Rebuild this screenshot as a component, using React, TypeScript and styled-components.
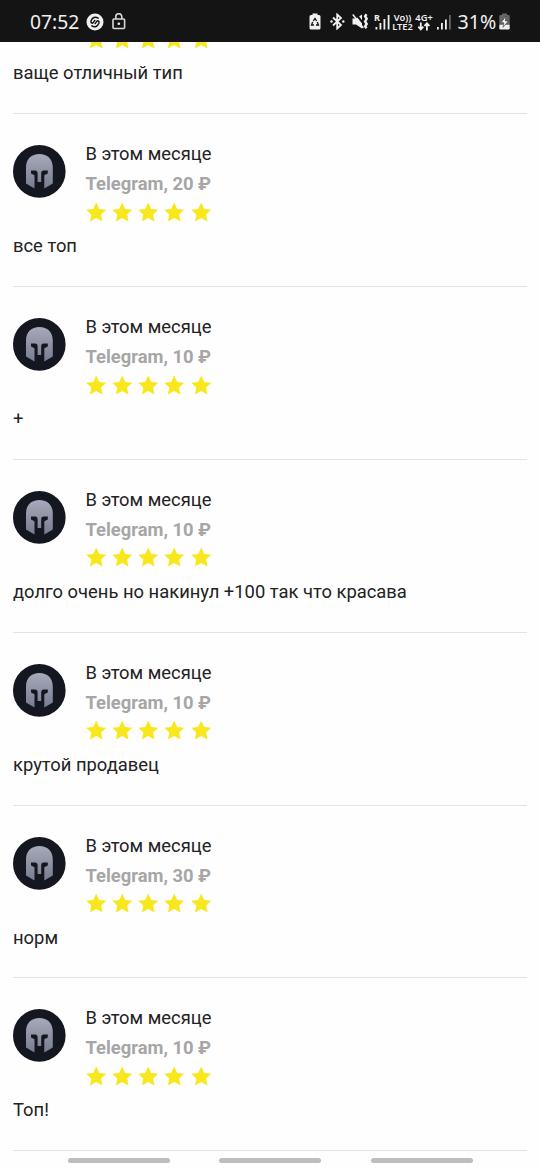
import React from 'react';
import styled, { createGlobalStyle } from 'styled-components';

const GlobalStyle = createGlobalStyle`
  * { box-sizing: border-box; }
  body { margin: 0; background: #fefefe; }
`;

const Screen = styled.div`
  width: 540px;
  height: 1170px;
  overflow: hidden;
  display: flex;
  flex-direction: column;
  background: #fefefe;
  font-family: Roboto, sans-serif;
  color: #222;
`;

const StatusBar = styled.header`
  flex: none;
  height: 41.5px;
  display: flex;
  justify-content: space-between;
  align-items: center;
  padding: 2px 30px 0 30px;
  background: #141414;
  color: #f0f0f0;
  font-family: 'Noto Sans', sans-serif;
`;

const StatusGroup = styled.div`
  display: flex;
  align-items: center;
`;

const Clock = styled.span`
  width: 49px;
  margin-right: 7px;
  font-size: 19.3px;
  line-height: 24px;
  white-space: nowrap;
`;

const Glyph = styled.svg<{ $gap?: number }>`
  display: block;
  flex: none;
  margin-right: ${p => p.$gap ?? 0}px;
`;

const Stack = styled.div<{ $width: number; $gap: number }>`
  width: ${p => p.$width}px;
  margin-right: ${p => p.$gap}px;
  display: flex;
  flex-direction: column;
  align-items: center;
  font-size: 9.3px;
  font-weight: 600;
  line-height: 9px;
  white-space: nowrap;
`;

const Percent = styled.span`
  width: 41.5px;
  font-size: 19.6px;
  line-height: 24px;
  white-space: nowrap;
`;

const Viewport = styled.main`
  flex: 1;
  min-height: 0;
  overflow: hidden;
  padding: 0 13px;
`;

const ReviewList = styled.ul`
  list-style: none;
  margin: -100.41px 0 0;
  padding: 0;
`;

const Review = styled.li`
  height: 172.9px;
  padding-top: 25px;
  border-bottom: 1.3px solid #e3e3e3;
`;

const ReviewHead = styled.div`
  display: flex;
  gap: 19.5px;
`;

const Avatar = styled.svg`
  flex: none;
  width: 53px;
  height: 53px;
  margin-top: 6px;
`;

const Title = styled.div`
  font-size: 18.37px;
  line-height: 30px;
  white-space: nowrap;
`;

const Price = styled(Title)`
  font-weight: 700;
  color: #a6a6a6;
`;

const Stars = styled.div`
  display: flex;
  gap: 5.3px;
  height: 32px;
  padding-top: 2.7px;
`;

const Comment = styled.p`
  margin: 0;
  font-size: 18.39px;
  line-height: 30px;
  white-space: nowrap;
`;

const NavBar = styled.nav`
  flex: none;
  height: 18px;
  display: flex;
  justify-content: center;
  gap: 49.5px;
  padding-top: 6px;
`;

const NavPill = styled.span`
  width: 102px;
  height: 5px;
  border-radius: 3px;
  background: #bdbdbd;
`;

const Star = () => (
  <Glyph width="21" height="21" viewBox="0 0 21 21">
    <path d="M10.200.6 13.200 7l7 .8-5.100 4.800 1.400 7-6.300-3.500-6.300 3.500 1.400-7L.2 7.800l7-.8z" fill="#f8e71c" />
  </Glyph>
);

const Helmet = () => (
  <Avatar viewBox="0 0 53 53">
    <defs>
      <linearGradient id="steel" x1="0" y1="0" x2="0" y2="1">
        <stop offset="0" stopColor="#a7aaba" />
        <stop offset="1" stopColor="#777c8f" />
      </linearGradient>
    </defs>
    <circle cx="26.3" cy="26.4" r="26.3" fill="#14171f" />
    <path
      d="M13 22.500C13 14 18.500 9 26.400 9S39.800 14 39.800 22.500V38.500L31.300 43.500V30.200L34.800 28.600V25.600H30.300Q28.200 25.800 28.200 28V37H24.600V28Q24.600 25.800 22.500 25.600H18V28.600L21.500 30.200V43.500L13 38.500Z"
      fill="url(#steel)"
    />
  </Avatar>
);

const Signal = ({ gap }: { gap: number }) => (
  <Glyph width="14" height="16" viewBox="0 0 14 16" $gap={gap} fill="#f0f0f0">
    <rect x="0" y="13" width="1.8" height="2.500" />
    <rect x="4" y="9" width="1.8" height="6.500" />
    <rect x="8" y="5.500" width="1.8" height="10" />
    <rect x="12" y="1" width="1.8" height="14.500" fill="#666" />
  </Glyph>
);

const reviews = [
  { price: 10, text: 'ваще отличный тип' },
  { price: 20, text: 'все топ' },
  { price: 10, text: '+' },
  { price: 10, text: 'долго очень но накинул +100 так что красава' },
  { price: 10, text: 'крутой продавец' },
  { price: 30, text: 'норм' },
  { price: 10, text: 'Топ!' },
];

export default function App() {
  return (
    <Screen>
      <GlobalStyle />
      <StatusBar>
        <StatusGroup>
          <Clock>07:52</Clock>
          <Glyph width="18" height="18" viewBox="0 0 18 18" $gap={8} fill="none">
            <circle cx="9" cy="9" r="8.500" fill="#f0f0f0" />
            <g stroke="#141414" strokeWidth="1.500" strokeLinecap="round" transform="rotate(-25 9 9)">
              <path d="M13.500 6.800C11.500 3.500 8.500 4 6 6.200c-1.500 1.500-.5 3.300 1.200 2.600l2.300-1.300" />
              <path d="M4.500 11.200C6.500 14.500 9.500 14 12 11.800c1.500-1.500.5-3.300-1.200-2.600l-2.300 1.300" />
            </g>
          </Glyph>
          <Glyph width="14" height="18" viewBox="0 0 14 18" fill="none" stroke="#d8d8d8" strokeWidth="1.600">
            <rect x="1" y="6" width="11.600" height="9.500" rx="1" />
            <path d="M3.800 6V3.700a3 3 0 0 1 6 0V6" />
            <circle cx="6.800" cy="10.700" r="1.300" fill="#f0f0f0" stroke="none" />
          </Glyph>
        </StatusGroup>
        <StatusGroup>
          <Glyph width="12" height="17" viewBox="0 0 12 17" $gap={9}>
            <path d="M3.500 2V.5h5V2H10q1.500 0 1.500 1.500v11.500q0 1.500-1.500 1.500H2Q.5 16.500.5 15V3.500Q.5 2 2 2z" fill="#f0f0f0" />
            <path d="M4.300 8 6 5.500 7.700 8M8.300 9 9.500 12H7M5 12H2.500l1.200-3" fill="none" stroke="#141414" strokeWidth="1.300" />
          </Glyph>
          <Glyph width="15" height="17" viewBox="0 0 15 17" $gap={7.5} fill="none" stroke="#f0f0f0" strokeWidth="1.800">
            <path d="m3 4.500 8 7.500-3.800 3.500v-14L11 5l-8 7.500" />
            <circle cx="1.500" cy="8.500" r="1.200" fill="#f0f0f0" stroke="none" />
            <circle cx="13.300" cy="8.500" r="1.200" fill="#f0f0f0" stroke="none" />
          </Glyph>
          <Glyph width="17" height="17" viewBox="0 0 17 17" $gap={5}>
            <path d="M.5 5.500h3.500L10 1.500v14L4 11.500H.5z" fill="#f0f0f0" />
            <path d="M3.500.3 12 11.300" stroke="#141414" strokeWidth="2" />
            <path d="m.8 1.500 10.500 13.500" stroke="#f0f0f0" strokeWidth="1.500" />
            <path d="m14.500 1.200-1.400 2 1.600 2.600-1.600 2.600 1.600 2.600-1.600 2.300 1.400 2" fill="none" stroke="#f0f0f0" strokeWidth="2.400" />
          </Glyph>
          <Glyph width="16" height="19" viewBox="-1 -2 16 19" $gap={1.5} fill="#f0f0f0">
            <text x="-1" y="6.500" fontSize="9" fontWeight="700">R</text>
            <rect x=".5" y="13" width="1.800" height="2.500" />
            <rect x="4.500" y="9" width="1.800" height="6.500" />
            <rect x="8.500" y="5" width="1.800" height="10.500" />
            <rect x="12.700" y="1" width="1.800" height="14.500" />
          </Glyph>
          <Stack $width={22} $gap={2}><span>Vo))</span><span>LTE2</span></Stack>
          <Stack $width={17} $gap={4}>
            <span>4G+</span>
            <Glyph width="12" height="9" viewBox="0 0 12 9" fill="none" stroke="#f0f0f0" strokeWidth="1.800">
              <path d="M2.800.5v7M.3 4.700l2.500 2.700 2.500-2.700M8.900 8.500V1.500M6.400 4l2.500-2.700L11.400 4" />
            </Glyph>
          </Stack>
          <Signal gap={7} />
          <Percent>31%</Percent>
          <Glyph width="11" height="17" viewBox="0 0 11 17">
            <path d="M3 2V.5h5V2h1.500q1.200 0 1.200 1.200V11H.3V3.200Q.3 2 1.500 2z" fill="#666" />
            <path d="M.3 11.500h10.400v3.800q0 1.200-1.200 1.200h-8Q.3 16.500.3 15.300z" fill="#f0f0f0" />
            <path d="M7 3 2 9.800h3l-1 4.500L9.300 8H6.200z" fill="#fff" stroke="#333" strokeWidth=".6" />
          </Glyph>
        </StatusGroup>
      </StatusBar>
      <Viewport>
        <ReviewList>
          {reviews.map((review, i) => (
            <Review key={i}>
              <ReviewHead>
                <Helmet />
                <div>
                  <Title>В этом месяце</Title>
                  <Price>Telegram, {review.price} ₽</Price>
                  <Stars>
                    {[0, 1, 2, 3, 4].map(n => <Star key={n} />)}
                  </Stars>
                </div>
              </ReviewHead>
              <Comment>{review.text}</Comment>
            </Review>
          ))}
        </ReviewList>
      </Viewport>
      <NavBar>
        <NavPill />
        <NavPill />
        <NavPill />
      </NavBar>
    </Screen>
  );
}
